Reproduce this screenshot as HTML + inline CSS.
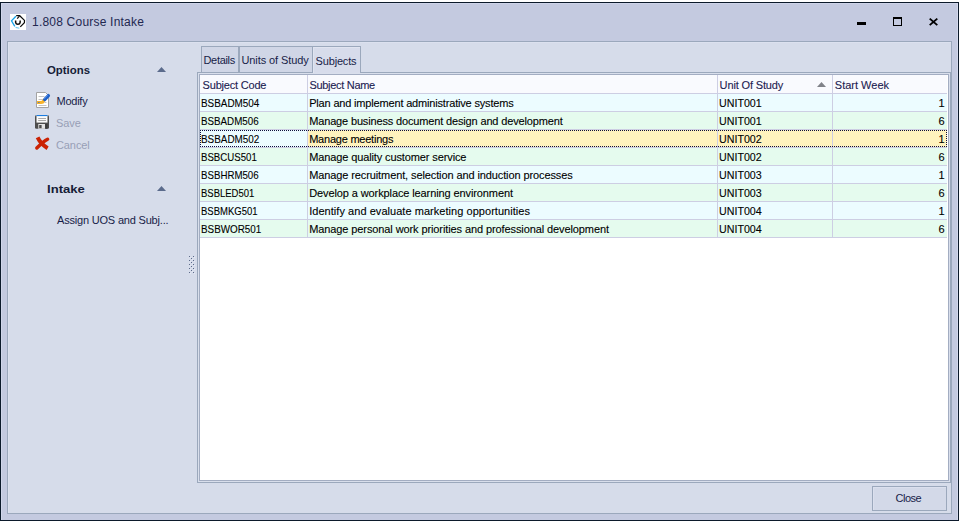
<!DOCTYPE html>
<html>
<head>
<meta charset="utf-8">
<title>1.808 Course Intake</title>
<style>
html,body{margin:0;padding:0;}
body{width:960px;height:523px;background:#ffffff;position:relative;overflow:hidden;
  font-family:"Liberation Sans",sans-serif;font-size:11px;color:#181d48;}
.abs{position:absolute;}
#win{position:absolute;left:0;top:2px;width:957px;height:517px;border:1px solid #0c1a2b;background:#c4cae0;}
#winhl{position:absolute;left:1px;top:3px;width:1px;height:517px;background:#d1d7eb;}
#title{position:absolute;left:32px;top:13px;height:18px;line-height:18px;font-size:12px;color:#232850;white-space:nowrap;letter-spacing:0.21px;}
#panel{position:absolute;left:7px;top:41px;width:943px;height:471px;border:1px solid #9ba8bc;background:#d6dcea;box-shadow:inset 1px 1px 0 #dce1ef;}
.t{position:absolute;white-space:nowrap;line-height:14px;height:14px;}
.b{font-weight:bold;color:#161c38;}
.dis{color:#989fb6;}
/* tabs */
.tab{position:absolute;top:46px;height:26px;border:1px solid #9ba8bc;border-bottom:none;background:#d0d6e6;box-sizing:border-box;}
.tab.act{background:#d7dceb;height:27px;box-shadow:inset 1px 1px 0 #e0e4f0;}
#page{position:absolute;left:197px;top:72px;width:754px;height:411px;border:1px solid #9ba8bc;background:#d9dfec;box-sizing:border-box;}
#grid{position:absolute;left:199px;top:74px;width:750px;height:407px;border:1px solid #a3adc2;background:#ffffff;box-sizing:border-box;}
.row{position:absolute;left:200px;width:747px;height:17px;border-bottom:1px solid #cdcee3;}
.hdr{background:#f9fafe;}
.az{background:#ecfcff;}
.hd{background:#e5fbee;}
.vl{position:absolute;top:75px;width:1px;height:163px;background:#cdcee3;}
.c{position:absolute;white-space:nowrap;line-height:14px;height:14px;color:#000;-webkit-text-stroke-width:0.1px;}
.h{color:#1c2150;}
.foc{background:#fff3be;}
.dots{background:repeating-linear-gradient(to right,#0e0e3c 0,#0e0e3c 1px,transparent 1px,transparent 2px);}
.dotsv{background:repeating-linear-gradient(to bottom,#0e0e3c 0,#0e0e3c 1px,transparent 1px,transparent 2px);}
.code{letter-spacing:-0.7px;}
#btn{position:absolute;left:872px;top:486px;width:75px;height:25px;border:1px solid #9ba8bc;background:#d3d9e8;box-sizing:border-box;box-shadow:inset 1px 1px 0 #dbe0ee;}
</style>
</head>
<body>
<div id="win"></div>
<div id="winhl"></div>
<div class="abs" style="left:1px;top:3px;width:957px;height:1px;background:#ced4e9"></div>
<div class="abs" style="left:957px;top:3px;width:1px;height:517px;background:#d3d8ec"></div>

<!-- title bar -->
<svg class="abs" style="left:10px;top:14px" width="16" height="16" viewBox="0 0 16 16">
  <rect width="16" height="16" fill="#ffffff"/>
  <path d="M5.9 2.2 L1.5 6.8 L4.8 12.4" fill="none" stroke="#18a4ea" stroke-width="1.3"/>
  <path d="M5.6 13.4 L9.4 14.2" fill="none" stroke="#74cdf6" stroke-width="1.1"/>
  <path d="M6.2 1.6 L9.7 1.7 L14.5 6.4 L14.4 8.7 L10.3 12.9" fill="none" stroke="#0c0c0c" stroke-width="1.2"/>
  <path d="M9.4 2.2 L7.2 4.7" fill="none" stroke="#0c0c0c" stroke-width="1.2"/>
  <path d="M5.6 6.5 L5.7 8.8 Q6.2 10.4 7.9 10.3 Q9.9 10.2 10.1 8.6 L10.2 6.5" fill="none" stroke="#0c0c0c" stroke-width="1.5"/>
</svg>
<div id="title">1.808 Course Intake</div>
<div class="abs" style="left:857px;top:22px;width:9px;height:3px;background:#000"></div>
<div class="abs" style="left:893px;top:17px;width:9px;height:9px;border:1px solid #000;border-top:2px solid #000;box-sizing:border-box"></div>
<svg class="abs" style="left:928px;top:17px" width="11" height="10" viewBox="0 0 11 10">
  <path d="M1.7 1.6 L9.3 8.1 M9.3 1.6 L1.7 8.1" stroke="#000" stroke-width="1.9" fill="none"/>
</svg>

<div id="panel"></div>

<!-- nav pane -->
<div class="t b" style="left:47px;top:63px;transform:scaleX(1.035);transform-origin:0 0">Options</div>
<svg class="abs" style="left:157px;top:67px" width="10" height="5" viewBox="0 0 10 5"><path d="M0 5 L4.5 0 L9 5 Z" fill="#5b6b8c"/></svg>

<div class="t" style="left:56.5px;top:94px;letter-spacing:-0.25px">Modify</div>
<div class="t dis" style="left:56px;top:116px;letter-spacing:-0.1px">Save</div>
<div class="t dis" style="left:56px;top:138px;letter-spacing:-0.1px">Cancel</div>

<div class="t b" style="left:47px;top:182px;transform:scaleX(1.19);transform-origin:0 0">Intake</div>
<svg class="abs" style="left:157px;top:186px" width="10" height="5" viewBox="0 0 10 5"><path d="M0 5 L4.5 0 L9 5 Z" fill="#5b6b8c"/></svg>
<div class="t" style="left:57px;top:213px;letter-spacing:-0.19px">Assign UOS and Subj...</div>


<!-- nav icons -->
<svg class="abs" style="left:35px;top:92px" width="16" height="16" viewBox="0 0 16 16">
  <path d="M1.5 0.5H10.5L13.5 3.5V15.5H1.5Z" fill="#ffffff" stroke="#a3a3a3"/>
  <path d="M3.5 4.5H9.5M3.5 7.5H8.5M9.5 10.5H11.5M3.5 13.5H11.5" stroke="#c4c4c4" stroke-width="1" fill="none"/>
  <path d="M2 9H6.4L8.6 6.4L10.6 8.4L8.6 11.4L6.2 12H2Z" fill="#f7b32a"/>
  <rect x="3" y="10" width="1.6" height="1" fill="#5d7fb4"/>
  <path d="M9.7 7.6L13.4 3.6" stroke="#1c5fc8" stroke-width="3.3" stroke-linecap="round" fill="none"/>
  <path d="M9.5 6.7L12.8 3.1" stroke="#4f8be6" stroke-width="1" stroke-linecap="round" fill="none"/>
</svg>
<svg class="abs" style="left:35px;top:115px" width="14" height="14" viewBox="0 0 14 14">
  <rect x="0" y="0.3" width="14" height="13.5" rx="1.3" fill="#4d4d4d"/>
  <rect x="1.5" y="0" width="11" height="7.6" fill="#fbfbfb"/>
  <rect x="1.5" y="0" width="11" height="1.1" fill="#1b7ce0"/>
  <path d="M3.2 3.5H11M3.2 5.5H11" stroke="#a9a9a9" stroke-width="1" fill="none"/>
  <rect x="3.3" y="9" width="6.7" height="4.8" fill="#e4e4e4"/>
  <rect x="4.2" y="10" width="2.4" height="3.2" fill="#4a4a4a"/>
  <rect x="10.4" y="9" width="2" height="4.8" fill="#3c3c3c"/>
</svg>
<svg class="abs" style="left:34px;top:136px" width="16" height="15" viewBox="0 0 16 15">
  <path d="M3.6 1.4 C5.6 5.6 9 9.4 13.6 12.2" stroke="#cb2203" stroke-width="4" stroke-linecap="butt" fill="none"/>
  <path d="M13.6 3.2 C10 5 6.2 8.6 2.8 12" stroke="#cb2203" stroke-width="3.4" stroke-linecap="round" fill="none"/>
</svg>
<!-- splitter grip -->
<svg class="abs" style="left:189px;top:256px" width="6" height="18" viewBox="0 0 6 18" shape-rendering="crispEdges">
  <g fill="#5d6b8a">
    <rect x="0" y="0" width="1" height="1"/><rect x="4" y="0" width="1" height="1"/>
    <rect x="2" y="2" width="1" height="1"/>
    <rect x="0" y="4" width="1" height="1"/><rect x="4" y="4" width="1" height="1"/>
    <rect x="2" y="6" width="1" height="1"/>
    <rect x="0" y="8" width="1" height="1"/><rect x="4" y="8" width="1" height="1"/>
    <rect x="2" y="10" width="1" height="1"/>
    <rect x="0" y="12" width="1" height="1"/><rect x="4" y="12" width="1" height="1"/>
    <rect x="2" y="14" width="1" height="1"/>
    <rect x="0" y="16" width="1" height="1"/><rect x="4" y="16" width="1" height="1"/>
  </g>
  <g fill="#e6eaf4">
    <rect x="1" y="1" width="1" height="1"/><rect x="5" y="1" width="1" height="1"/>
    <rect x="3" y="3" width="1" height="1"/>
    <rect x="1" y="5" width="1" height="1"/><rect x="5" y="5" width="1" height="1"/>
    <rect x="3" y="7" width="1" height="1"/>
    <rect x="1" y="9" width="1" height="1"/><rect x="5" y="9" width="1" height="1"/>
    <rect x="3" y="11" width="1" height="1"/>
    <rect x="1" y="13" width="1" height="1"/><rect x="5" y="13" width="1" height="1"/>
    <rect x="3" y="15" width="1" height="1"/>
    <rect x="1" y="17" width="1" height="1"/><rect x="5" y="17" width="1" height="1"/>
  </g>
</svg>

<!-- tabs -->
<div class="tab" style="left:201px;width:38px;"></div>
<div class="tab" style="left:239px;width:74px;"></div>
<div id="page"></div>
<div class="tab act" style="left:312px;width:49px;"></div>
<div class="t" style="left:203.5px;top:53px;letter-spacing:-0.33px">Details</div>
<div class="t" style="left:241.5px;top:53px;letter-spacing:-0.1px">Units of Study</div>
<div class="t" style="left:315.6px;top:54px;letter-spacing:-0.18px">Subjects</div>

<div id="grid"></div>
<div class="row hdr" style="top:75px;height:18px"></div>

<!-- grid header -->
<div class="c h" style="left:202.6px;top:78px;letter-spacing:-0.2px">Subject Code</div>
<div class="c h" style="left:309.4px;top:78px;letter-spacing:-0.3px">Subject Name</div>
<div class="c h" style="left:719.6px;top:78px;letter-spacing:-0.14px">Unit Of Study</div>
<div class="c h" style="left:834.8px;top:78px;letter-spacing:0px">Start Week</div>
<svg class="abs" style="left:817px;top:82px" width="10" height="5" viewBox="0 0 10 5"><path d="M0 5 L4.5 0 L9 5 Z" fill="#808289"/></svg>
<!-- grid rows -->
<div class="row az" style="top:94px"></div>
<div class="c" style="left:200.8px;top:96px;transform:scaleX(0.900);transform-origin:0 0">BSBADM504</div>
<div class="c" style="left:309.2px;top:96px;letter-spacing:-0.175px">Plan and implement administrative systems</div>
<div class="c unit" style="left:719.3px;top:96px;transform:scaleX(0.97);transform-origin:0 0">UNIT001</div>
<div class="c num" style="left:900px;width:44.7px;text-align:right;top:96px;">1</div>
<div class="row hd" style="top:112px"></div>
<div class="c" style="left:200.8px;top:114px;transform:scaleX(0.889);transform-origin:0 0">BSBADM506</div>
<div class="c" style="left:309.2px;top:114px;letter-spacing:-0.152px">Manage business document design and development</div>
<div class="c unit" style="left:719.3px;top:114px;transform:scaleX(0.97);transform-origin:0 0">UNIT001</div>
<div class="c num" style="left:900px;width:44.7px;text-align:right;top:114px;">6</div>
<div class="row az" style="top:130px"></div>
<div class="abs foc" style="left:308px;top:130px;width:639px;height:17px;"></div>
<div class="c" style="left:200.8px;top:132px;transform:scaleX(0.900);transform-origin:0 0">BSBADM502</div>
<div class="c" style="left:309.2px;top:132px;letter-spacing:-0.229px">Manage meetings</div>
<div class="c unit" style="left:719.3px;top:132px;transform:scaleX(0.97);transform-origin:0 0">UNIT002</div>
<div class="c num" style="left:900px;width:44.7px;text-align:right;top:132px;">1</div>
<div class="row hd" style="top:148px"></div>
<div class="c" style="left:200.8px;top:150px;transform:scaleX(0.877);transform-origin:0 0">BSBCUS501</div>
<div class="c" style="left:309.2px;top:150px;letter-spacing:-0.117px">Manage quality customer service</div>
<div class="c unit" style="left:719.3px;top:150px;transform:scaleX(0.97);transform-origin:0 0">UNIT002</div>
<div class="c num" style="left:900px;width:44.7px;text-align:right;top:150px;">6</div>
<div class="row az" style="top:166px"></div>
<div class="c" style="left:200.8px;top:168px;transform:scaleX(0.881);transform-origin:0 0">BSBHRM506</div>
<div class="c" style="left:309.2px;top:168px;letter-spacing:-0.106px">Manage recruitment, selection and induction processes</div>
<div class="c unit" style="left:719.3px;top:168px;transform:scaleX(0.97);transform-origin:0 0">UNIT003</div>
<div class="c num" style="left:900px;width:44.7px;text-align:right;top:168px;">1</div>
<div class="row hd" style="top:184px"></div>
<div class="c" style="left:200.8px;top:186px;transform:scaleX(0.862);transform-origin:0 0">BSBLED501</div>
<div class="c" style="left:309.2px;top:186px;letter-spacing:-0.105px">Develop a workplace learning environment</div>
<div class="c unit" style="left:719.3px;top:186px;transform:scaleX(0.97);transform-origin:0 0">UNIT003</div>
<div class="c num" style="left:900px;width:44.7px;text-align:right;top:186px;">6</div>
<div class="row az" style="top:202px"></div>
<div class="c" style="left:200.8px;top:204px;transform:scaleX(0.865);transform-origin:0 0">BSBMKG501</div>
<div class="c" style="left:309.2px;top:204px;letter-spacing:0.043px">Identify and evaluate marketing opportunities</div>
<div class="c unit" style="left:719.3px;top:204px;transform:scaleX(0.97);transform-origin:0 0">UNIT004</div>
<div class="c num" style="left:900px;width:44.7px;text-align:right;top:204px;">1</div>
<div class="row hd" style="top:220px"></div>
<div class="c" style="left:200.8px;top:222px;transform:scaleX(0.897);transform-origin:0 0">BSBWOR501</div>
<div class="c" style="left:309.2px;top:222px;letter-spacing:-0.100px">Manage personal work priorities and professional development</div>
<div class="c unit" style="left:719.3px;top:222px;transform:scaleX(0.97);transform-origin:0 0">UNIT004</div>
<div class="c num" style="left:900px;width:44.7px;text-align:right;top:222px;">6</div>
<div class="vl" style="left:307px"></div>
<div class="vl" style="left:717px"></div>
<div class="vl" style="left:832px"></div>
<div class="abs dots" style="left:200px;top:130px;width:747px;height:1px;"></div>
<div class="abs dots" style="left:200px;top:146px;width:747px;height:1px;"></div>
<div class="abs dotsv" style="left:200px;top:130px;width:1px;height:17px;"></div>
<div class="abs dotsv" style="left:946px;top:130px;width:1px;height:17px;"></div>

<div id="btn"></div>
<div class="t" style="left:895.6px;top:491px;letter-spacing:-0.55px">Close</div>
</body>
</html>
